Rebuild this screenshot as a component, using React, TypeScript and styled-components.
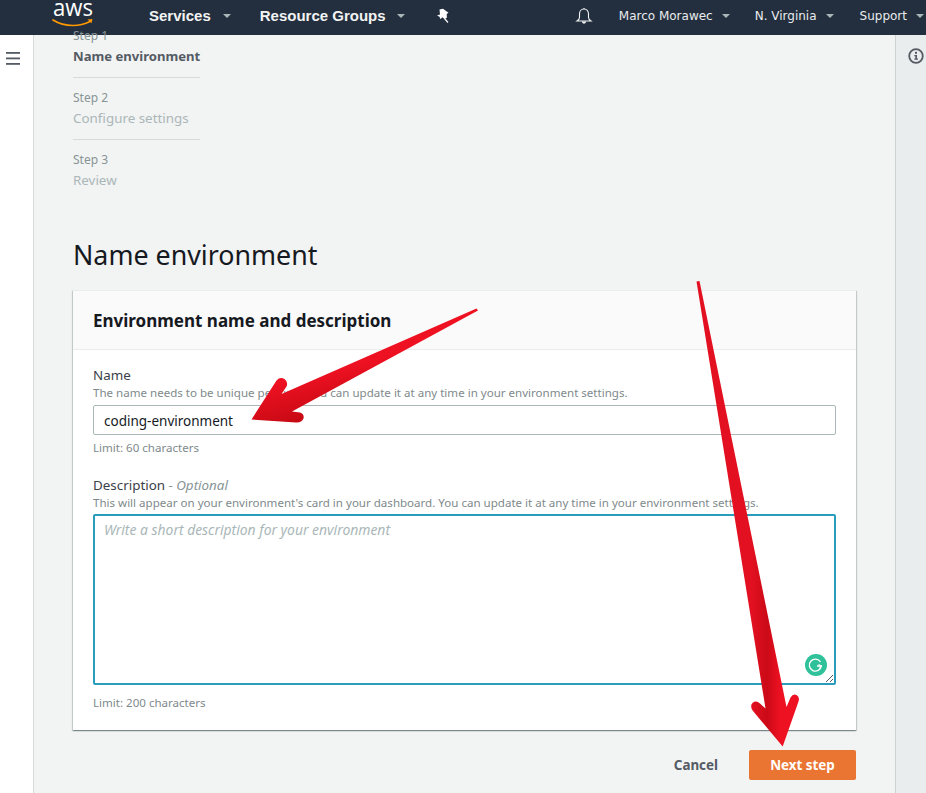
import React from 'react';
import styled, { createGlobalStyle } from 'styled-components';

const GlobalStyle = createGlobalStyle`
  html, body {
    margin: 0;
    padding: 0;
    height: 793px;
    overflow: hidden;
    background: #fff;
  }
  * { box-sizing: border-box; }
`;

const Page = styled.div`
  position: relative;
  width: 926px;
  height: 793px;
  overflow: hidden;
  font-family: "Noto Sans", "Open Sans", sans-serif;
  color: #545b64;
`;

const TopBar = styled.header`
  height: 35px;
  padding-bottom: 4px;
  background: #232f3e;
  display: flex;
  align-items: center;
  color: #f2f3f3;
`;

const LogoWrap = styled.div`
  width: 149px;
  padding-left: 52px;
  display: flex;
  align-items: center;
`;

const MainLink = styled.span<{ $gap: number }>`
  display: inline-flex;
  align-items: center;
  font-family: "Liberation Sans", Arial, sans-serif;
  font-weight: 700;
  font-size: 15px;
  color: #f2f3f3;
  margin-right: ${p => p.$gap}px;
`;

const SideLink = styled.span<{ $gap: number }>`
  display: inline-flex;
  align-items: center;
  font-family: "DejaVu Sans", Verdana, sans-serif;
  font-size: 12px;
  color: #e9ebed;
  margin-right: ${p => p.$gap}px;
`;

const Caret = styled.span<{ $left: number }>`
  width: 0;
  height: 0;
  margin-left: ${p => p.$left}px;
  border-left: 4px solid transparent;
  border-right: 4px solid transparent;
  border-top: 4px solid #aab7b8;
`;

const Spacer = styled.div`
  flex: 1;
`;

const BellSlot = styled.span`
  display: inline-flex;
  margin-right: 26px;
`;

const Body = styled.div`
  display: flex;
  height: 758px;
`;

const LeftRail = styled.aside`
  width: 34px;
  background: #fff;
  border-right: 1px solid #d5dbdb;
  padding: 13px 0 0 6px;
`;

const Content = styled.main`
  flex: 1;
  background: #f2f3f3;
  padding: 0 39px;
  min-width: 0;
`;

const RightRail = styled.aside`
  width: 31px;
  background: #eaeded;
  border-left: 1px solid #cdd3d3;
  padding: 12px 0 0 12px;
`;

const Steps = styled.nav`
  width: 127px;
  margin-top: -9px;
`;

const Step = styled.div<{ $last?: boolean }>`
  padding-top: 1px;
  border-bottom: ${p => (p.$last ? 'none' : '1px solid #d5dbdb')};
  margin-bottom: ${p => (p.$last ? '0' : '10px')};
  height: ${p => (p.$last ? '42px' : '52px')};
`;

const StepNumber = styled.div`
  font-size: 12px;
  line-height: 18px;
  color: #879596;
`;

const StepName = styled.div<{ $active?: boolean }>`
  font-size: ${p => (p.$active ? '13.1px' : '13.4px')};
  line-height: 22px;
  white-space: nowrap;
  font-weight: ${p => (p.$active ? 700 : 400)};
  color: ${p => (p.$active ? '#545b64' : '#aab7b8')};
`;

const Title = styled.h1`
  margin: 44px 0 0;
  font-size: 26.8px;
  line-height: 38px;
  font-weight: 400;
  color: #16191f;
`;

const Card = styled.section`
  margin-top: 16px;
  height: 440px;
  background: #fff;
  border-top: 1px solid #eaeded;
  box-shadow: 0 1px 1px 0 rgba(0, 28, 36, 0.3), 1px 1px 1px 0 rgba(0, 28, 36, 0.15), -1px 1px 1px 0 rgba(0, 28, 36, 0.15);
`;

const CardHeader = styled.div`
  height: 59px;
  background: #fafafa;
  border-bottom: 1px solid #eaeded;
  padding: 0 20px;
  display: flex;
  align-items: center;
`;

const CardTitle = styled.h2`
  margin: 0;
  font-size: 17px;
  font-weight: 700;
  color: #16191f;
`;

const CardBody = styled.div`
  padding: 15px 20px 0;
`;

const Field = styled.div<{ $gap: number }>`
  margin-bottom: ${p => p.$gap}px;
`;

const Label = styled.div`
  font-size: 13.4px;
  line-height: 20px;
  color: #3b4148;
  em {
    color: #879596;
    font-style: italic;
  }
`;

const Hint = styled.div`
  font-size: 11.55px;
  line-height: 16px;
  color: #808a8c;
  white-space: nowrap;
`;

const TextInput = styled.div`
  height: 30px;
  margin-top: 4px;
  border: 1px solid #aab7b8;
  border-radius: 2px;
  padding: 0 10px;
  font-size: 13.5px;
  line-height: 30px;
  color: #16191f;
`;

const TextArea = styled.div`
  position: relative;
  height: 171px;
  margin-top: 3px;
  border: 2px solid #2a9dbd;
  border-radius: 2px;
  padding: 4px 9px;
  font-size: 13.9px;
  line-height: 20px;
  font-style: italic;
  color: #aab7b8;
`;

const Limit = styled.div<{ $top: number }>`
  margin-top: ${p => p.$top}px;
  font-size: 11.55px;
  line-height: 16px;
  color: #808a8c;
`;

const Grammarly = styled.svg`
  position: absolute;
  right: 7px;
  bottom: 7px;
`;

const Grip = styled.svg`
  position: absolute;
  right: 0;
  bottom: 0;
`;

const Actions = styled.div`
  display: flex;
  justify-content: flex-end;
  align-items: center;
  gap: 31px;
  margin-top: 20px;
`;

const CancelLink = styled.span`
  font-size: 13.4px;
  font-weight: 700;
  color: #545b64;
`;

const NextButton = styled.span`
  width: 107px;
  height: 30px;
  display: flex;
  align-items: center;
  justify-content: center;
  background: #ea7533;
  border-radius: 2px;
  font-size: 13.4px;
  font-weight: 700;
  color: #fff;
`;

const Arrows = styled.svg`
  position: absolute;
  left: 0;
  top: 0;
  pointer-events: none;
`;

const AwsLogo = () => (
  <svg width="44" height="31" viewBox="0 0 44 31">
    <text x="1" y="16" fontFamily="Open Sans, sans-serif" fontSize="24" fill="#fff" textLength="40" lengthAdjust="spacingAndGlyphs">aws</text>
    <path d="M1 20c6 3.800 13 5.500 20 5.500 6 0 12-1.500 17-4" fill="none" stroke="#f90" strokeWidth="1.700" strokeLinecap="round" />
    <path d="M35.500 19.500l5-.6-1 4.300z" fill="#f90" />
  </svg>
);

const PinIcon = () => (
  <svg width="14" height="15" viewBox="0 0 14 15">
    <path d="M3.500 1.500L7 .8l5.500 4-1.800 1.200.2 3.800-2.400 1.300-2.200-1.800-1.800 2-1-2.500-2.500-1.200L4 6.500z" fill="#fff" />
    <path d="M8.500 10.500l3.500 4" stroke="#fff" strokeWidth="1.200" />
  </svg>
);

const BellIcon = () => (
  <svg width="18" height="18" viewBox="0 0 18 18" fill="none" stroke="#f2f3f3" strokeWidth="1.100">
    <path d="M9 2c-3 0-4.500 2.300-4.500 5v3.500c0 1.500-1 2.500-2.500 3.500h14c-1.500-1-2.500-2-2.500-3.500V7c0-2.700-1.500-5-4.500-5z" />
    <path d="M9 1v1" />
    <path d="M7.500 14.500c0 1 .7 1.600 1.500 1.600s1.500-.6 1.500-1.600" fill="#f2f3f3" />
  </svg>
);

const MenuIcon = () => (
  <svg width="16" height="14" viewBox="0 0 16 14" fill="#545b64">
    <rect x="0" y="1" width="14" height="1.800" />
    <rect x="0" y="6.500" width="14" height="1.800" />
    <rect x="0" y="12" width="14" height="1.800" />
  </svg>
);

const InfoIcon = () => (
  <svg width="16" height="16" viewBox="0 0 16 16">
    <circle cx="8" cy="8" r="6.800" fill="none" stroke="#545b64" strokeWidth="1.800" />
    <rect x="7" y="3.800" width="2" height="2" fill="#545b64" />
    <path d="M6.300 7h2.700v3.600h1v1.200H6.300v-1.200h1V8.200h-1z" fill="#545b64" />
  </svg>
);

export default function App() {
  return (
    <Page>
      <GlobalStyle />
      <TopBar>
        <LogoWrap><AwsLogo /></LogoWrap>
        <MainLink $gap={29}>Services<Caret $left={12} /></MainLink>
        <MainLink $gap={31}>Resource Groups<Caret $left={11} /></MainLink>
        <PinIcon />
        <Spacer />
        <BellSlot><BellIcon /></BellSlot>
        <SideLink $gap={25}>Marco Morawec<Caret $left={9} /></SideLink>
        <SideLink $gap={26}>N. Virginia<Caret $left={9} /></SideLink>
        <SideLink $gap={2}>Support<Caret $left={9} /></SideLink>
      </TopBar>
      <Body>
        <LeftRail><MenuIcon /></LeftRail>
        <Content>
          <Steps>
            <Step>
              <StepNumber>Step 1</StepNumber>
              <StepName $active>Name environment</StepName>
            </Step>
            <Step>
              <StepNumber>Step 2</StepNumber>
              <StepName>Configure settings</StepName>
            </Step>
            <Step $last>
              <StepNumber>Step 3</StepNumber>
              <StepName>Review</StepName>
            </Step>
          </Steps>
          <Title>Name environment</Title>
          <Card>
            <CardHeader>
              <CardTitle>Environment name and description</CardTitle>
            </CardHeader>
            <CardBody>
              <Field $gap={19}>
                <Label>Name</Label>
                <Hint>The name needs to be unique per user. You can update it at any time in your environment settings.</Hint>
                <TextInput>coding-environment</TextInput>
                <Limit $top={5}>Limit: 60 characters</Limit>
              </Field>
              <Field $gap={0}>
                <Label>Description <em>- Optional</em></Label>
                <Hint>This will appear on your environment's card in your dashboard. You can update it at any time in your environment settings.</Hint>
                <TextArea>
                  Write a short description for your environment
                  <Grammarly width="22" height="22" viewBox="0 0 22 22">
                    <circle cx="11" cy="11" r="11" fill="#2fc19a" />
                    <path d="M15.500 8a6 6 0 1 0 .8 4h-4.300" fill="none" stroke="#fff" strokeWidth="1.400" />
                    <path d="M13.500 10.500l2.800 1.500-1.800 2.500" fill="none" stroke="#fff" strokeWidth="1.200" />
                  </Grammarly>
                  <Grip width="10" height="10" viewBox="0 0 10 10">
                    <path d="M2 9l7-7M6 9l3-3" stroke="#545b64" strokeWidth="1" />
                  </Grip>
                </TextArea>
                <Limit $top={10}>Limit: 200 characters</Limit>
              </Field>
            </CardBody>
          </Card>
          <Actions>
            <CancelLink>Cancel</CancelLink>
            <NextButton>Next step</NextButton>
          </Actions>
        </Content>
        <RightRail><InfoIcon /></RightRail>
      </Body>
      <Arrows width="926" height="793" viewBox="0 0 926 793">
        <defs>
          <linearGradient id="arrowA" x1="290" y1="380" x2="300" y2="420" gradientUnits="userSpaceOnUse">
            <stop offset="0" stopColor="#ee1122" />
            <stop offset="1" stopColor="#c80a14" />
          </linearGradient>
          <linearGradient id="arrowB" x1="752" y1="720" x2="790" y2="720" gradientUnits="userSpaceOnUse">
            <stop offset="0" stopColor="#e21020" />
            <stop offset="0.4" stopColor="#cb0a17" />
            <stop offset="0.75" stopColor="#ee1122" />
          </linearGradient>
        </defs>
        <path d="M476.500 308.500 L478 310.500 L292 411.500 L300 412.500 Q304.500 414 303.500 418.500 Q301.500 423 296 422.500 L251.500 419.500 L276.500 380.500 Q280 376.500 284.500 379 Q288.500 382 286.500 386.500 L281.500 394 Z" fill="url(#arrowA)" />
        <path d="M696.500 281.500 L699.500 281 L786.500 707 L790.500 697.500 Q793 693.500 796.500 695 Q800 697 798.500 701.500 L782.700 746.500 L753 711 Q749.500 706 752.500 703 Q756 700 760 703.500 L765.500 708.500 Z" fill="url(#arrowB)" />
      </Arrows>
    </Page>
  );
}
